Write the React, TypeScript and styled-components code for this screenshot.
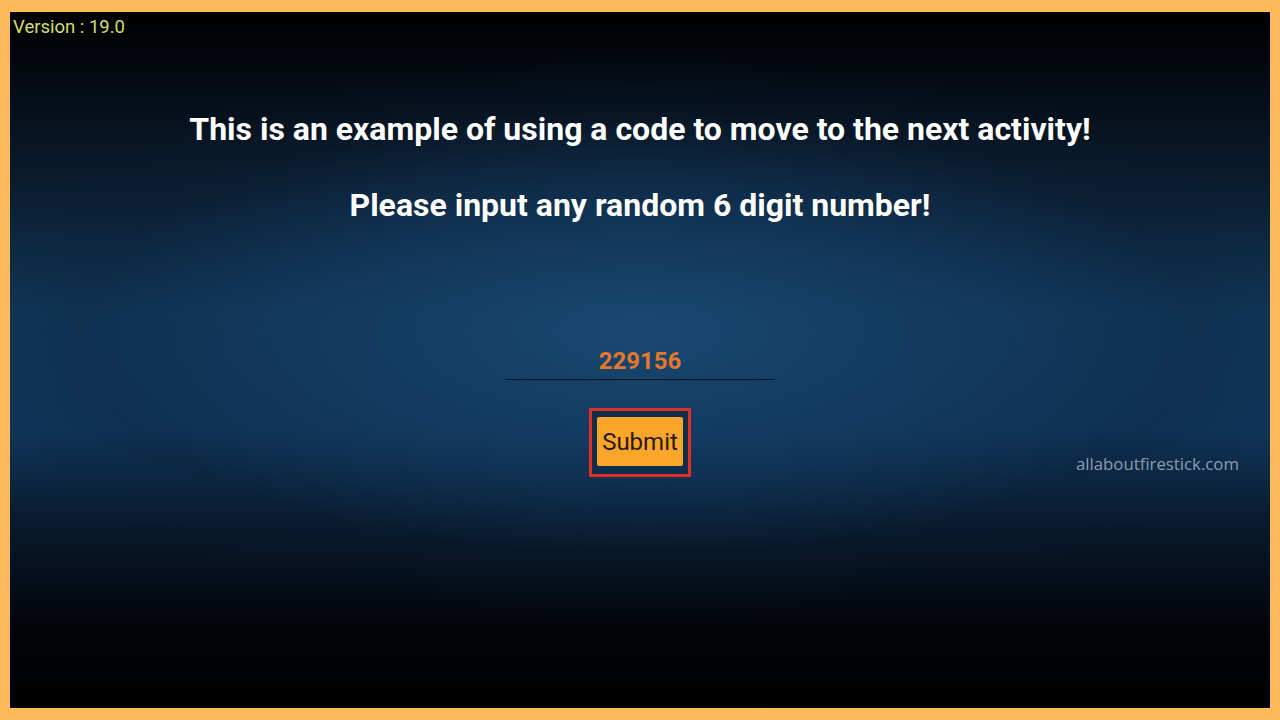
import React from "react";
import styled, { createGlobalStyle } from "styled-components";

const Global = createGlobalStyle`
  html, body { margin: 0; padding: 0; background: #FEBA5B; }
  body { width: 1280px; height: 720px; overflow: hidden; }
`;

const Frame = styled.div`
  box-sizing: border-box;
  width: 1280px;
  height: 720px;
  padding: 12px 10px 12px 10px;
  background: #FEBA5B;
`;

const Screen = styled.div`
  position: relative;
  box-sizing: border-box;
  width: 100%;
  height: 100%;
  overflow: hidden;
  display: flex;
  flex-direction: column;
  align-items: center;
  background:
    radial-gradient(ellipse 700px 280px at 50% 46%, rgba(26, 76, 118, 0.8) 0%, rgba(20, 60, 98, 0.6) 45%, rgba(10, 30, 52, 0.25) 80%, rgba(0,0,0,0) 100%),
    linear-gradient(180deg, #000000 0%, #03080f 8%, #0b1f33 27%, #113759 43%, #10355a 60%, #08192c 74%, #020509 88%, #000000 100%);
  font-family: Roboto, "Noto Sans", sans-serif;
`;

const Version = styled.div`
  align-self: flex-start;
  margin: 4px 0 0 3px;
  font-size: 18.5px;
  line-height: 22px;
  color: #d3dd72;
`;

const Title = styled.h1<{ $top: number }>`
  margin: ${(p) => p.$top}px 0 0 0;
  font-size: 32px;
  line-height: 38px;
  font-weight: 700;
  color: #ffffff;
  text-align: center;
`;

const CodeField = styled.div`
  margin-top: 123px;
  width: 268px;
  padding-bottom: 4px;
  border-bottom: 1px solid #06131f;
  text-align: center;
  font-size: 24px;
  line-height: 28px;
  font-weight: 700;
  color: #e5782b;
`;

const FocusRing = styled.div`
  margin-top: 28px;
  padding: 6px 5px 8px 5px;
  border: 3px solid #dd2f27;
  background: #0d2f4c;
`;

const SubmitButton = styled.button`
  display: block;
  width: 86px;
  height: 49px;
  border: none;
  border-radius: 2px;
  background: #f9a62b;
  color: #2a1808;
  font-family: Roboto, "Noto Sans", sans-serif;
  font-size: 24px;
  padding: 0;
`;

const Watermark = styled.div`
  position: absolute;
  right: 31px;
  top: 440px;
  font-family: "Open Sans", "Noto Sans", sans-serif;
  font-size: 16.8px;
  color: #8e9cb2;
`;

export default function App() {
  return (
    <>
      <Global />
      <Frame>
        <Screen>
          <Version>Version : 19.0</Version>
          <Title $top={72}>This is an example of using a code to move to the next activity!</Title>
          <Title $top={38}>Please input any random 6 digit number!</Title>
          <CodeField>229156</CodeField>
          <FocusRing>
            <SubmitButton>Submit</SubmitButton>
          </FocusRing>
          <Watermark>allaboutfirestick.com</Watermark>
        </Screen>
      </Frame>
    </>
  );
}
